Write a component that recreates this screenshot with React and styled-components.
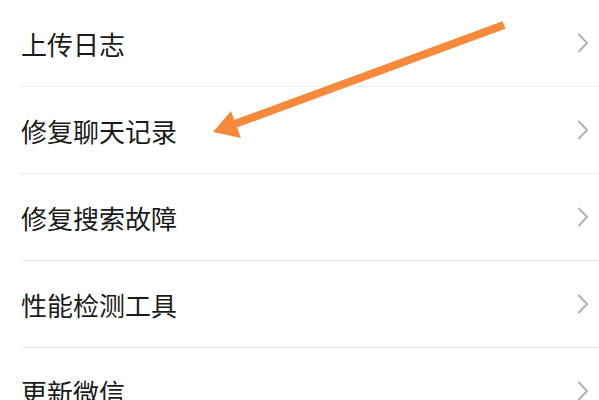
import React from "react";
import styled, { createGlobalStyle } from "styled-components";

const GlobalStyle = createGlobalStyle`
  html, body {
    margin: 0;
    padding: 0;
    background: #ffffff;
  }
  body {
    font-family: "Noto Sans CJK SC", "Noto Sans", sans-serif;
    overflow: hidden;
  }
`;

const Page = styled.div`
  position: relative;
  width: 599px;
  height: 400px;
  background: #ffffff;
  overflow: hidden;
`;

const List = styled.ul`
  list-style: none;
  margin: 0;
  padding: 0 0 0 20px;
`;

const Row = styled.li`
  display: flex;
  align-items: center;
  justify-content: space-between;
  height: 86px;
  padding-right: 10px;
  border-bottom: 1px solid ${(p) => (p.last ? "transparent" : "#ededed")};
`;

const Label = styled.span`
  font-size: 26px;
  line-height: 30px;
  color: #1a1a1a;
  padding-left: 1px;
  padding-top: 2px;
`;

const Chevron = styled.svg`
  width: 12px;
  height: 22px;
  flex-shrink: 0;
`;

const Arrow = styled.svg`
  position: absolute;
  left: 0;
  top: 0;
  pointer-events: none;
`;

const items = ["上传日志", "修复聊天记录", "修复搜索故障", "性能检测工具", "更新微信"];

function ChevronRight() {
  return (
    <Chevron viewBox="0 0 12 22">
      <polyline
        points="1.5,2 10,11 1.5,20"
        fill="none"
        stroke="#b2b2b2"
        strokeWidth="2"
        strokeLinejoin="miter"
      />
    </Chevron>
  );
}

export default function App() {
  return (
    <Page>
      <GlobalStyle />
      <List>
        {items.map((t, i) => (
          <Row key={t} last={i === items.length - 1}>
            <Label>{t}</Label>
            <ChevronRight />
          </Row>
        ))}
      </List>
      <Arrow width="599" height="400" viewBox="0 0 599 400">
        <line x1="504" y1="25" x2="232" y2="125" stroke="#f78a3a" strokeWidth="8" />
        <polygon points="213,132 231,111 241,138" fill="#f78a3a" />
      </Arrow>
    </Page>
  );
}
